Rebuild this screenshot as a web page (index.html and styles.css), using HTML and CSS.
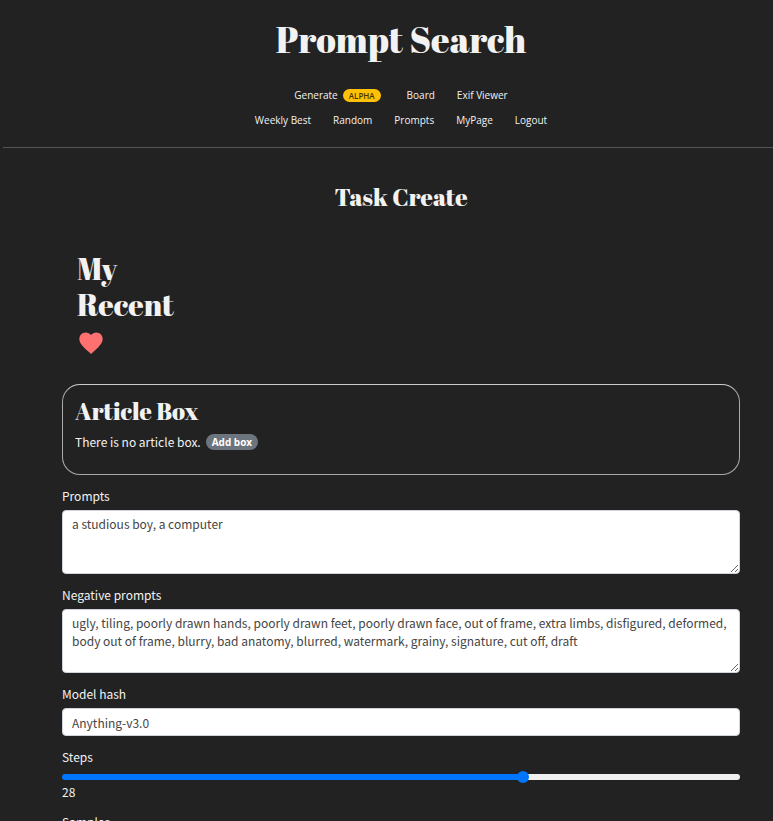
FILE: index.html
```html
<!DOCTYPE html>
<html lang="en">
<head>
<meta charset="utf-8">
<title>Prompt Search</title>
<link rel="stylesheet" href="styles.css">
</head>
<body>
<header class="header">
  <h1 class="brand">Prompt Search</h1>
  <nav class="nav">
    <div class="nav-row">
      <a class="with-badge" href="#">Generate <span class="alpha">ALPHA</span></a>
      <a href="#">Board</a>
      <a href="#">Exif Viewer</a>
    </div>
    <div class="nav-row">
      <a href="#">Weekly Best</a>
      <a href="#">Random</a>
      <a href="#">Prompts</a>
      <a href="#">MyPage</a>
      <a href="#">Logout</a>
    </div>
  </nav>
</header>
<main class="main">
  <h2 class="page-title">Task Create</h2>
  <section class="recent">
    <h2 class="recent-title">My<br>Recent</h2>
    <svg class="heart" viewBox="0 0 24 24" aria-hidden="true"><path d="M12 21.35l-1.45-1.32C5.4 15.36 2 12.28 2 8.5 2 5.42 4.42 3 7.5 3c1.74 0 3.41.81 4.5 2.09C13.09 3.81 14.76 3 16.5 3 19.58 3 22 5.42 22 8.5c0 3.78-3.4 6.86-8.55 11.54L12 21.35z"/></svg>
  </section>
  <section class="article-box">
    <h3 class="article-title">Article Box</h3>
    <div class="article-row">
      <span>There is no article box.</span>
      <button class="add" type="button">Add box</button>
    </div>
  </section>
  <form class="form">
    <div class="field">
      <label for="prompts">Prompts</label>
      <textarea id="prompts" class="control area" spellcheck="false">a studious boy, a computer</textarea>
    </div>
    <div class="field">
      <label for="negative">Negative prompts</label>
      <textarea id="negative" class="control area" spellcheck="false">ugly, tiling, poorly drawn hands, poorly drawn feet, poorly drawn face, out of frame, extra limbs, disfigured, deformed, body out of frame, blurry, bad anatomy, blurred, watermark, grainy, signature, cut off, draft</textarea>
    </div>
    <div class="field">
      <label for="model">Model hash</label>
      <input id="model" class="control line" type="text" value="Anything-v3.0">
    </div>
    <div class="field">
      <label for="steps">Steps</label>
      <input id="steps" class="range" type="range" min="0" max="41" value="28">
      <output for="steps">28</output>
    </div>
    <div class="field">
      <label for="sampler">Samples</label>
      <input id="sampler" class="control line" type="text">
    </div>
  </form>
</main>
</body>
</html>
```

FILE: styles.css
```css
* { box-sizing: border-box; }
html, body { height: 100%; overflow: hidden; }
body {
  margin: 0;
  background: #222;
  color: #f2f2f2;
  font: 12px/18px "Noto Sans CJK KR", sans-serif;
}
h1, h2, h3 {
  margin: 0;
  font-family: "Abril Fatface", "Liberation Serif", serif;
  font-weight: 400;
}
.header {
  margin-left: 3px;
  padding: 15px 0 18px 26px;
  border-bottom: 1px solid #555;
  text-align: center;
}
.brand { font-size: 36px; line-height: 48px; }
.nav {
  display: flex;
  flex-direction: column;
  gap: 7px;
  margin-top: 23px;
  font: 10px/18px "Open Sans", sans-serif;
}
.nav-row { display: flex; justify-content: center; gap: 22px; }
.nav a { color: #f2f2f2; text-decoration: none; }
.with-badge { display: flex; align-items: center; gap: 5px; margin-right: 4px; }
.alpha {
  padding: 0 6px;
  border-radius: 7px;
  background: #ffc107;
  color: #443400;
  font: 600 8px/13px "Open Sans", sans-serif;
}
.main { padding: 31px 33px 0 62px; }
.page-title { font-size: 24px; line-height: 36px; text-align: center; }
.recent { padding: 36px 15px 27px; }
.recent-title { font-size: 30px; line-height: 36px; }
.heart { display: block; width: 28px; height: 28px; margin-top: 6px; fill: #ff7070; }
.article-box {
  padding: 11px 12px 23px;
  border: 1px solid #aaa;
  border-top-color: #ccc;
  border-radius: 18px;
}
.article-title { font-size: 24px; line-height: 30px; }
.article-row { display: flex; align-items: center; gap: 5px; margin-top: 7px; }
.add {
  padding: 0 6px;
  border: 0;
  border-radius: 8px;
  background: #6c757d;
  color: #fff;
  font: 700 10px/16px "Open Sans", sans-serif;
}
.form { display: flex; flex-direction: column; gap: 12px; margin-top: 12px; }
.field { display: flex; flex-direction: column; }
.field label { margin-bottom: 5px; }
.control {
  width: 100%;
  margin: 0;
  padding: 4px 9px;
  border: 1px solid #ced4da;
  border-radius: 4px;
  background: #fff;
  color: #444;
  font: 12px/18px "Noto Sans CJK KR", sans-serif;
}
.area { height: 64px; resize: vertical; overflow: hidden; }
.line { height: 28px; }
.range {
  appearance: none;
  width: 100%;
  height: 12px;
  margin: 0;
  background: transparent;
}
.range::-webkit-slider-runnable-track {
  height: 6px;
  border-radius: 3px;
  background: linear-gradient(to right, #0075ff 68%, #efefef 68%);
}
.range::-webkit-slider-thumb {
  appearance: none;
  width: 12px;
  height: 12px;
  margin-top: -3px;
  border-radius: 50%;
  background: #0075ff;
}
```
